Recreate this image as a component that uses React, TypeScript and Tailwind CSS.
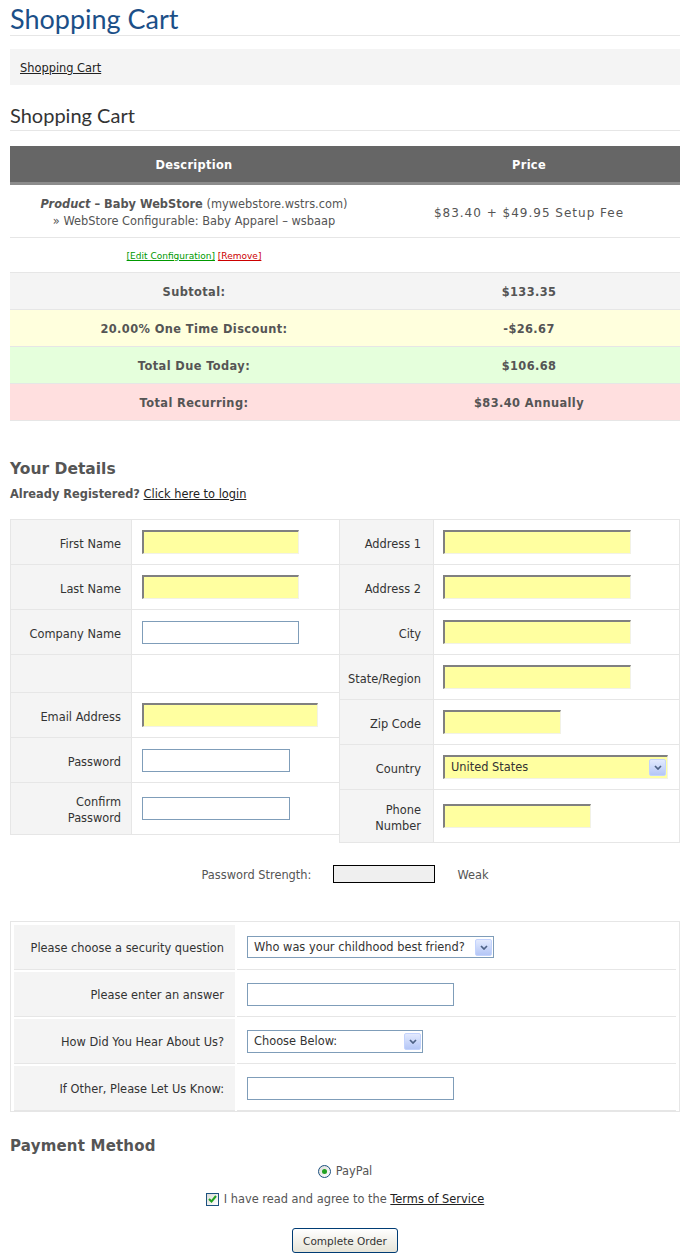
import React from "react";

const yellow =
  "bg-[#ffffa0] border-t-2 border-l-2 border-r border-b border-t-[#808080] border-l-[#808080] border-r-[#f2f2e6] border-b-[#f2f2e6] outline-none";
const plain = "bg-white border border-[#7f9db9] outline-none";

function Arrow() {
  return (
    <span className="flex h-[17px] w-[17px] items-center justify-center rounded-[2px] border border-[#c3d3fd] bg-linear-to-b from-[#e3eafe] to-[#b4c6f6]">
      <svg width="8" height="5" viewBox="0 0 8 5">
        <path d="M1 1l3 3 3-3" fill="none" stroke="#4d6185" strokeWidth="1.7" />
      </svg>
    </span>
  );
}

function Select({ text, className }: { text: string; className: string }) {
  return (
    <div className={`flex items-center justify-between pl-[6px] pr-[1px] text-[#333] ${className}`}>
      <span className="pt-[1px]">{text}</span>
      <Arrow />
    </div>
  );
}

function Row({
  label,
  h,
  labelW,
  pad,
  children,
}: {
  label?: React.ReactNode;
  h: string;
  labelW: string;
  pad: string;
  children?: React.ReactNode;
}) {
  return (
    <div className={`flex border-b border-[#e6e6e6] ${h}`}>
      <div
        className={`flex shrink-0 items-center justify-end border-r border-[#e6e6e6] bg-[#f4f4f4] pt-[3px] text-right leading-[16px] ${labelW}`}
      >
        {label}
      </div>
      <div className={`flex flex-1 items-center ${pad}`}>{children}</div>
    </div>
  );
}

const totals = [
  { label: "Subtotal:", value: "$133.35", bg: "bg-[#f4f4f4]" },
  { label: "20.00% One Time Discount:", value: "-$26.67", bg: "bg-[#ffffdd]" },
  { label: "Total Due Today:", value: "$106.68", bg: "bg-[#e5ffdc]" },
  { label: "Total Recurring:", value: "$83.40 Annually", bg: "bg-[#ffdfdf]" },
];

const security = [
  {
    label: "Please choose a security question",
    field: <Select text="Who was your childhood best friend?" className={`h-[22px] w-[247px] ${plain}`} />,
  },
  { label: "Please enter an answer", field: <input className={`h-[23px] w-[207px] ${plain}`} /> },
  {
    label: "How Did You Hear About Us?",
    field: <Select text="Choose Below:" className={`h-[23px] w-[176px] ${plain}`} />,
  },
  { label: "If Other, Please Let Us Know:", field: <input className={`h-[23px] w-[207px] ${plain}`} /> },
];

export default function App() {
  const L = { labelW: "w-[121px] pr-[10px]", pad: "pl-[10px]" };
  const R = { labelW: "w-[94px] pr-[12px]", pad: "pl-[9px]" };

  return (
    <div className="min-h-screen bg-white pl-[10px] pr-[9px] font-['DejaVu_Sans',Verdana,sans-serif] text-[11.4px] text-[#333]">
      <h1 className="mt-[2px] border-b border-[#e6e6e6] font-['Lato',sans-serif] text-[27px] leading-[33px] text-[#1b4f88]">
        Shopping Cart
      </h1>

      <div className="mt-[13px] flex h-[36px] items-center bg-[#f4f4f4] pt-[3px] pl-[10px]">
        <a className="text-[#222] underline">Shopping Cart</a>
      </div>

      <h2 className="mt-[18px] border-b border-[#e6e6e6] pb-[3px] font-['Lato',sans-serif] text-[20px] leading-[24px] text-[#333]">
        Shopping Cart
      </h2>

      {/* cart table */}
      <div className="mt-[15px] text-[#555]">
        <div className="grid h-[39px] grid-cols-[368px_1fr] border-b-[3px] border-[#8c8c8c] bg-[#666] pt-[4px] font-bold tracking-[0.3px] text-white">
          <div className="flex items-center justify-center">Description</div>
          <div className="flex items-center justify-center">Price</div>
        </div>
        <div className="grid h-[53px] grid-cols-[368px_1fr] border-b border-[#e6e6e6] pt-[3px]">
          <div className="flex flex-col items-center justify-center leading-[17px]">
            <div>
              <b>
                <i>Product</i> – Baby WebStore
              </b>{" "}
              (mywebstore.wstrs.com)
            </div>
            <div>» WebStore Configurable: Baby Apparel – wsbaap</div>
          </div>
          <div className="flex items-center justify-center text-[12px] tracking-[1px]">
            $83.40 + $49.95 Setup Fee
          </div>
        </div>
        <div className="grid h-[35px] grid-cols-[368px_1fr] border-b border-[#e6e6e6] pt-[3px]">
          <div className="flex items-center justify-center text-[9px]">
            <a className="text-[#009900] underline">[Edit Configuration]</a>&nbsp;
            <a className="text-[#cc0000] underline">[Remove]</a>
          </div>
          <div />
        </div>
        {totals.map((t) => (
          <div
            key={t.label}
            className={`grid h-[37px] grid-cols-[368px_1fr] border-b border-[#e6e6e6] pt-[3px] font-bold tracking-[0.4px] ${t.bg}`}
          >
            <div className="flex items-center justify-center">{t.label}</div>
            <div className="flex items-center justify-center">{t.value}</div>
          </div>
        ))}
      </div>

      {/* your details */}
      <h3 className="mt-[39px] text-[15.5px] leading-[18px] font-bold text-[#555]">Your Details</h3>
      <div className="mt-[8px] leading-[16px]">
        <b className="text-[#555]">Already Registered?</b>{" "}
        <a className="text-[#222] underline">Click here to login</a>
      </div>

      <div className="mt-[17px] flex items-start">
        <div className="w-[329px] border-t border-l border-[#e6e6e6]">
          <Row label="First Name" h="h-[45px]" {...L}>
            <input className={`h-[24px] w-[157px] ${yellow}`} />
          </Row>
          <Row label="Last Name" h="h-[45px]" {...L}>
            <input className={`h-[24px] w-[157px] ${yellow}`} />
          </Row>
          <Row label="Company Name" h="h-[45px]" {...L}>
            <input className={`h-[23px] w-[157px] ${plain}`} />
          </Row>
          <Row h="h-[38px]" {...L} />
          <Row label="Email Address" h="h-[45px]" {...L}>
            <input className={`h-[24px] w-[176px] ${yellow}`} />
          </Row>
          <Row label="Password" h="h-[45px]" {...L}>
            <input type="password" className={`h-[23px] w-[148px] ${plain}`} />
          </Row>
          <Row
            label={
              <span>
                Confirm
                <br />
                Password
              </span>
            }
            h="h-[52px]"
            {...L}
          >
            <input type="password" className={`h-[23px] w-[148px] ${plain}`} />
          </Row>
        </div>

        <div className="flex-1 border-t border-r border-l border-[#e6e6e6]">
          <Row label="Address 1" h="h-[45px]" {...R}>
            <input className={`h-[24px] w-[188px] ${yellow}`} />
          </Row>
          <Row label="Address 2" h="h-[45px]" {...R}>
            <input className={`h-[24px] w-[188px] ${yellow}`} />
          </Row>
          <Row label="City" h="h-[45px]" {...R}>
            <input className={`h-[24px] w-[188px] ${yellow}`} />
          </Row>
          <Row label="State/Region" h="h-[45px]" {...R}>
            <input className={`h-[24px] w-[188px] ${yellow}`} />
          </Row>
          <Row label="Zip Code" h="h-[45px]" {...R}>
            <input className={`h-[24px] w-[118px] ${yellow}`} />
          </Row>
          <Row label="Country" h="h-[45px]" {...R}>
            <Select text="United States" className={`h-[24px] w-[225px] ${yellow}`} />
          </Row>
          <Row
            label={
              <span>
                Phone
                <br />
                Number
              </span>
            }
            h="h-[53px]"
            {...R}
          >
            <input className={`h-[24px] w-[148px] ${yellow}`} />
          </Row>
        </div>
      </div>

      <div className="mt-[22px] flex h-[18px] items-center justify-center gap-[22px] text-[#555]">
        <span className="pt-[3px]">Password Strength:</span>
        <span className="h-[18px] w-[102px] border border-black bg-[#efefef]" />
        <span className="pt-[3px]">Weak</span>
      </div>

      {/* security questions */}
      <div className="mt-[38px] flex flex-col gap-[2px] border border-[#e6e6e6] px-[3px] pt-[3px]">
        {security.map((s) => (
          <div key={s.label} className="flex h-[45px] gap-[2px]">
            <div className="flex w-[221px] items-center justify-end border-b border-[#e6e6e6] bg-[#f4f4f4] pt-[3px] pr-[11px]">
              {s.label}
            </div>
            <div className="flex flex-1 items-center border-b border-[#e6e6e6] pl-[10px]">{s.field}</div>
          </div>
        ))}
      </div>

      {/* payment */}
      <h3 className="mt-[25px] text-[15px] leading-[18px] font-bold tracking-[0.2px] text-[#555]">
        Payment Method
      </h3>
      <div className="mt-[8px] flex h-[16px] items-center justify-center gap-[5px] text-[#555]">
        <span className="flex h-[13px] w-[13px] items-center justify-center rounded-full border border-[#1c5180] bg-linear-to-br from-[#dcdcd7] to-white">
          <span className="h-[5px] w-[5px] rounded-full bg-[#21a121]" />
        </span>
        <span className="pt-[2px]">PayPal</span>
      </div>
      <div className="mt-[12px] flex h-[16px] items-center justify-center gap-[5px] text-[#555]">
        <span className="flex h-[13px] w-[13px] items-center justify-center border border-[#1c5180] bg-linear-to-br from-[#dcdcd7] to-white">
          <svg width="9" height="8" viewBox="0 0 9 8">
            <path d="M1 4l2.5 2.5L8 1" fill="none" stroke="#21a121" strokeWidth="2" />
          </svg>
        </span>
        <span className="pt-[2px]">
          I have read and agree to the <a className="text-[#222] underline">Terms of Service</a>
        </span>
      </div>
      <div className="mt-[21px] flex justify-center pb-[6px]">
        <button className="h-[25px] w-[106px] rounded-[3px] border border-[#003c74] bg-linear-to-b from-white to-[#e6e4d8] pt-[2px] text-[10.5px] text-[#333]">
          Complete Order
        </button>
      </div>
    </div>
  );
}
